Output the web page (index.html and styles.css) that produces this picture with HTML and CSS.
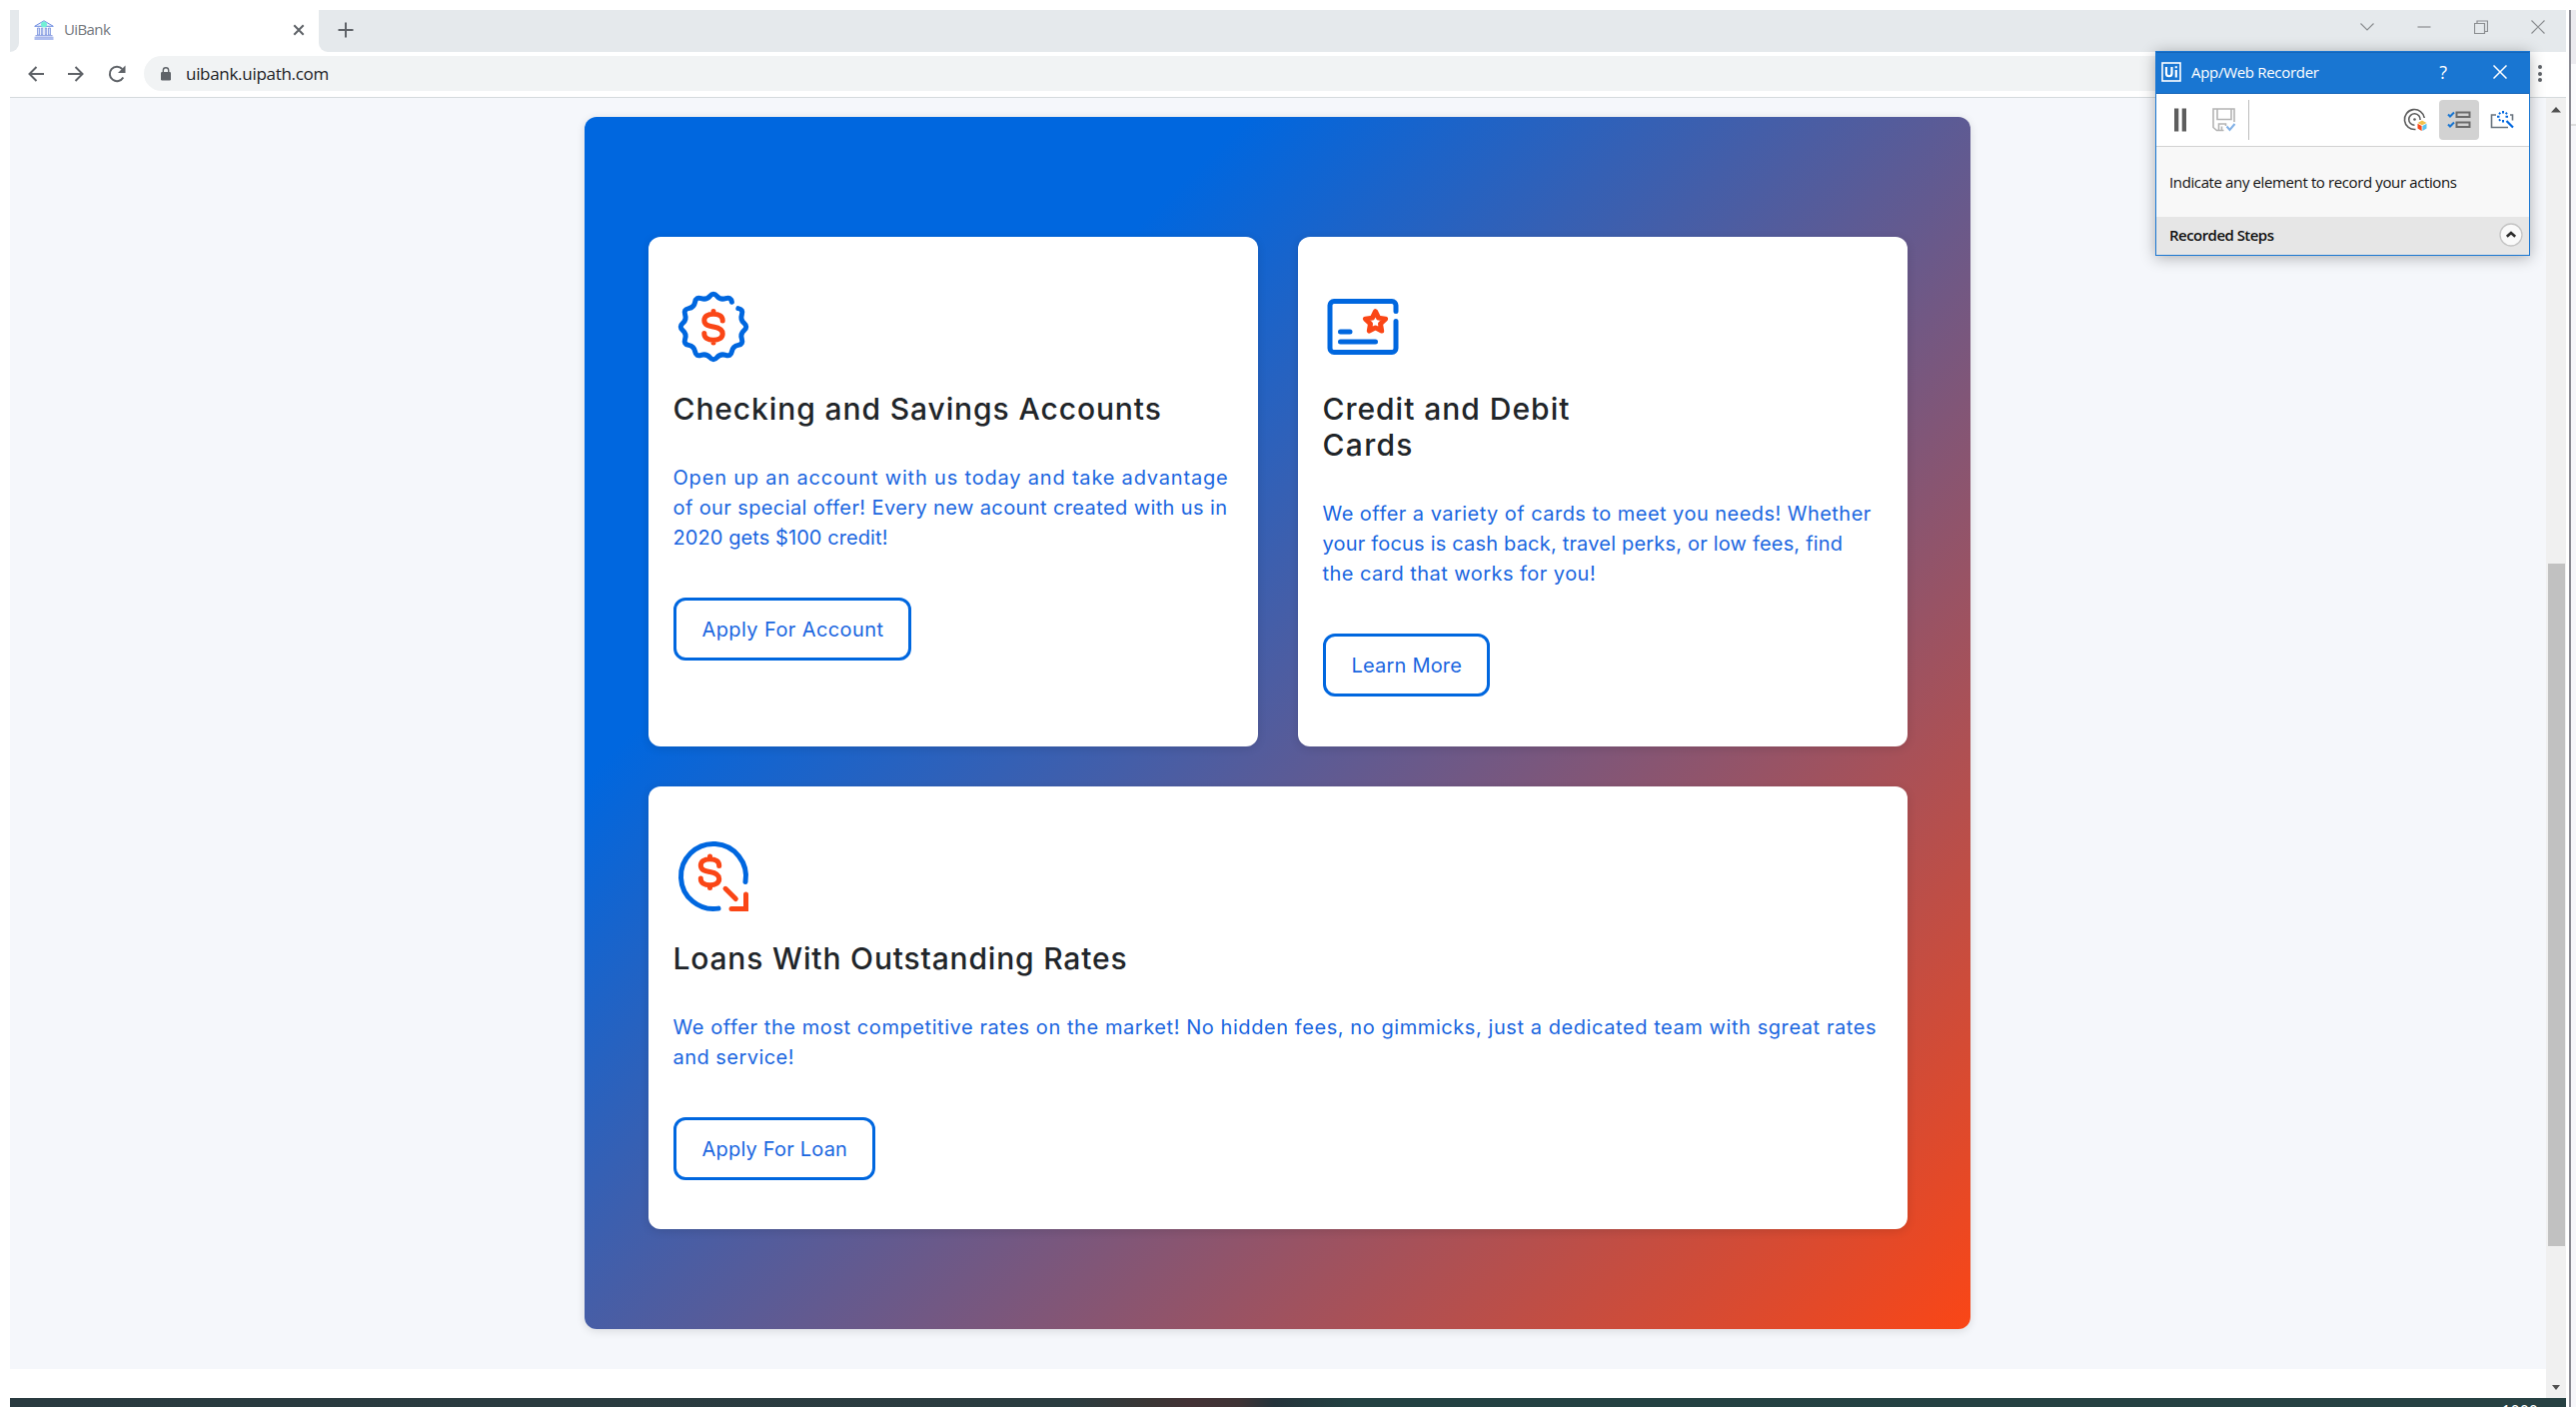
FILE: index.html
```html
<!DOCTYPE html>
<html lang="en">
<head>
<meta charset="utf-8">
<title>UiBank</title>
<link rel="stylesheet" href="styles.css">
</head>
<body>
<div class="browser">
  <header class="tabstrip">
    <div class="strip-start"></div>
    <div class="tab">
      <svg class="favicon" width="20" height="20" viewBox="0 0 20 20">
        <path d="M.7 6.300 10 .8l9.300 5.500z" fill="#eef3fd" stroke="#6d8ce0" stroke-width="1"/>
        <circle cx="10" cy="4.500" r="3" fill="#72f0d6"/>
        <path d="M3.500 8h2v7h-2zM7.300 8h1.500v7H7.300zM11.200 8h1.500v7h-1.500zM14.500 8h2v7h-2z" fill="#d3ddf8" stroke="#6d86da" stroke-width=".7"/>
        <path d="M1.500 15.500h17v2h-17z" fill="#dbe3fa"/>
        <path d="M1.500 15.500h17M.5 17.300h19" stroke="#8398e0" stroke-width=".8"/>
        <path d="M.5 18.500h19v1H.5z" fill="#5f7de0"/>
      </svg>
      <span class="tab-title">UiBank</span>
      <svg class="tab-close" width="12" height="12" viewBox="0 0 12 12"><path d="m1.300 1.300 9.400 9.400m0-9.400-9.400 9.400" stroke="#5f6368" stroke-width="2"/></svg>
    </div>
    <div class="strip-rest">
      <svg class="new-tab" width="16" height="16" viewBox="0 0 16 16"><path d="M8 .5v15M.5 8h15" stroke="#5f6368" stroke-width="2"/></svg>
      <div class="window-controls">
        <svg width="14" height="14" viewBox="0 0 14 14"><path d="m.5 3.500 6.500 6.500 6.500-6.500"/></svg>
        <svg width="14" height="14" viewBox="0 0 14 14"><path d="M.5 7h13"/></svg>
        <svg width="14" height="14" viewBox="0 0 14 14"><path d="M.5 3.500h10v10H.5zM3 3V1h10.500v10.500H11"/></svg>
        <svg width="14" height="14" viewBox="0 0 14 14"><path d="m.5.5 13 13m0-13-13 13"/></svg>
      </div>
    </div>
  </header>
  <div class="toolbar">
    <svg width="16" height="16" viewBox="0 0 16 16"><path d="M16 8H1.500M8.500 1 1.500 8l7 7"/></svg>
    <svg width="16" height="16" viewBox="0 0 16 16"><path d="M0 8h14.500M7.500 1l7 7-7 7"/></svg>
    <svg width="18" height="18" viewBox="0 0 18 18"><path d="M15.300 12.500A7.200 7.200 0 1 1 14.300 4"/><path d="M17.500.5v7.500H10z" fill="#5f6368" stroke="none"/></svg>
    <div class="omnibox">
      <svg width="10" height="14" viewBox="0 0 10 14"><rect y="5" width="10" height="8.500" rx="1.200" fill="#5f6368" stroke="none"/><path d="M2.300 6V3.500a2.700 2.700 0 0 1 5.400 0V6" stroke-width="1.400"/></svg>
      <span>uibank.uipath.com</span>
    </div>
    <div class="menu-dots"><i></i><i></i><i></i></div>
  </div>
  <div class="viewport">
    <main class="page">
      <section class="panel">
        <article class="card">
          <svg class="card-icon" width="80" height="80" viewBox="-40 -40 80 80">
            <path class="blue" d="M24.800-18.400Q30.100-17.400 28.400-12.300Q26.600-7.100 30.700-3.600Q34.800 0 30.700 3.600Q26.600 7.100 28.400 12.300Q30.100 17.400 24.800 18.400Q19.400 19.400 18.400 24.800Q17.400 30.100 12.300 28.400Q7.100 26.600 3.600 30.700Q0 34.800-3.600 30.700Q-7.100 26.600-12.300 28.400Q-17.400 30.100-18.400 24.800Q-19.400 19.400-24.800 18.400Q-30.100 17.400-28.400 12.300Q-26.600 7.100-30.700 3.600Q-34.800 0-30.700-3.600Q-26.600-7.100-28.400-12.300Q-30.100-17.400-24.800-18.400Q-19.400-19.400-18.400-24.800Q-17.400-30.100-12.300-28.400Q-7.100-26.600-3.600-30.700Q0-34.800 3.600-30.700Q7.100-26.600 12.300-28.400Q17.400-30.100 18.400-24.800"/>
            <path class="orange" d="M9.200-6V-6.500C9.200-10.500 5.500-12.800 0-12.800S-9.200-10.500-9.200-6.500C-9.200-1.500-4.500-.8 0 0S9.200 2 9.200 7C9.200 11 5.500 13.200 0 13.200S-9.200 11-9.200 7V6.500M0-15.500V-13M0 13.500V16"/>
          </svg>
          <h2><span class="h-checking">Checking and Savings Accounts</span></h2>
          <p><span class="c1">Open up an account with us today and take advantage</span><br><span class="c2">of our special offer! Every new acount created with us in</span><br><span class="c3">2020 gets $100 credit!</span></p>
          <a class="button b-account">Apply For Account</a>
        </article>
        <article class="card">
          <svg class="card-icon" width="80" height="80" viewBox="-40 -40 80 80">
            <path class="blue" d="M33-15.500V-21.500a4 4 0 0 0-4-4h-58a4 4 0 0 0-4 4v43a4 4 0 0 0 4 4h58a4 4 0 0 0 4-4V-5.500M-22.500 5h9.500M-22.500 15H12.500"/>
            <path class="orange" d="M12.500-15.300 15.600-8.900 22.600-7.900 17.500-3 18.700 4.100 12.500.9 6.300 4.100 7.500-3 2.400-7.900 9.400-8.900Z"/>
          </svg>
          <h2><span class="h-credit">Credit and Debit</span><br><span class="h-cards">Cards</span></h2>
          <p><span class="d1">We offer a variety of cards to meet you needs! Whether</span><br><span class="d2">your focus is cash back, travel perks, or low fees, find</span><br><span class="d1">the card that works for you!</span></p>
          <a class="button b-learn">Learn More</a>
        </article>
        <article class="card wide">
          <svg class="card-icon" width="80" height="80" viewBox="-40 -40 80 80">
            <path class="blue" d="M32 5.500A32.500 32.500 0 1 0 5 32.100"/>
            <path class="orange" transform="translate(-3.500 -4.500)" d="M9.200-6V-6.500C9.200-10.500 5.500-12.800 0-12.800S-9.200-10.500-9.200-6.500C-9.200-1.500-4.500-.8 0 0S9.200 2 9.200 7C9.200 11 5.500 13.200 0 13.200S-9.200 11-9.200 7V6.500M0-15.500V-13M0 13.500V16"/>
            <path class="orange miter" d="M12 12.300 22.300 22.600M32.500 18V32.500H18"/>
          </svg>
          <h2><span class="h-loans">Loans With Outstanding Rates</span></h2>
          <p><span class="l1">We offer the most competitive rates on the market! No hidden fees, no gimmicks, just a dedicated team with sgreat rates</span><br><span class="d1">and service!</span></p>
          <a class="button b-loan">Apply For Loan</a>
        </article>
      </section>
    </main>
    <div class="scrollbar">
      <svg width="10" height="6" viewBox="0 0 10 6"><path d="M5 0l5 5.500H0z" fill="#505050"/></svg>
      <div class="track"><div class="thumb"></div></div>
      <svg width="8" height="5" viewBox="0 0 8 5"><path d="M4 5 8 0H0z" fill="#505050"/></svg>
    </div>
  </div>
  <footer class="desktop"><span>1000</span></footer>
</div>
<div class="edge"><i class="edge-top"></i><i class="edge-rest"></i></div>

<section class="recorder">
  <header class="rec-title">
    <svg width="20" height="20" viewBox="0 0 20 20"><rect x="1" y="1" width="18" height="18" fill="none" stroke="#fff" stroke-width="1.600"/><path d="M5 5v6.500a2.500 2.500 0 0 0 5.500 0V5M14.800 8v7.500M14.800 4.200v2" fill="none" stroke="#fff" stroke-width="2.200"/></svg>
    <span class="rec-name">App/Web Recorder</span>
    <span class="rec-help">?</span>
    <svg width="14" height="14" viewBox="0 0 14 14"><path d="m.5.5 13 13m0-13-13 13" stroke="#fff" stroke-width="1.500"/></svg>
  </header>
  <div class="rec-tools">
    <svg class="pause" width="12" height="24" viewBox="0 0 12 24"><path d="M0 .5h4.300v23H0zM7.700 .5H12v23H7.700z" fill="#5d5d5d"/></svg>
    <svg class="save" width="24" height="24" viewBox="0 0 24 24" fill="none" stroke="#b4b4b4" stroke-width="1.600"><path d="M22 14V1H1v18.500L4.500 22.500h7M5 1v10.500h14V1M6.500 22V16h7v2M9.500 18.500V22"/><path d="m14.500 18.500 3 3.500 5-6" stroke="#82b1e6" stroke-width="2"/></svg>
    <i class="divider"></i>
    <svg class="target" width="24" height="24" viewBox="0 0 24 24" fill="none" stroke="#5d5d5d" stroke-width="1.600"><path d="M21.300 10A10 10 0 1 0 12.500 21.500M17.100 12A5.700 5.700 0 1 0 11.500 17.200"/><circle cx="11.500" cy="11.500" r="1.300" fill="#5d5d5d" stroke="none"/><path d="m14.500 15 4.500-2.500 4.500 2.500-4.500 2.300z" fill="#f3c14b" stroke="none"/><path d="M14.500 15.700 18.600 18v5l-4.100-2.500z" fill="#fa4616" stroke="none"/><path d="M23.500 15.700 19.400 18v5l4.100-2.500z" fill="#5bc4ee" stroke="none"/></svg>
    <div class="tool-on"><svg width="24" height="20" viewBox="0 0 24 20" fill="none"><path d="M9.500 2.500h13v4.500h-13zM9.500 12.500h13v4.500h-13z" stroke="#6a6a6a" stroke-width="2"/><path d="m1 4.500 2 2 4-4M1 14.500l2 2 4-4" stroke="#1976d2" stroke-width="2"/></svg></div>
    <svg class="wand" width="24" height="20" viewBox="0 0 24 20" fill="none"><path d="M6 5H1.500v12.500h16.500M20 5h2.500v5.500" stroke="#68737d" stroke-width="1.600"/><path d="m16.500 11 6.500 6.500" stroke="#0067df" stroke-width="2.200"/><path d="M13 1v2.500M13 10v2.500M7 6.800h2.500M15.500 6.800H18M9 2.800l1.300 1.300M17 2.800l-1.300 1.300M9 10.800l1.300-1.300" stroke="#0067df" stroke-width="2"/></svg>
  </div>
  <p class="rec-hint">Indicate any element to record your actions</p>
  <footer class="rec-steps">
    <span>Recorded Steps</span>
    <svg width="24" height="24" viewBox="0 0 24 24"><circle cx="12" cy="12" r="11" fill="#fafafa" stroke="#c4c4c4" stroke-width="1.300"/><path d="m7.800 13.800 4.200-3.800 4.200 3.800" fill="none" stroke="#2d2d2d" stroke-width="2.600"/></svg>
  </footer>
</section>
</body>
</html>
```
FILE: styles.css
```css
* { box-sizing: border-box; }
svg { display: block; flex: none; }
i { display: block; }

body {
  margin: 0;
  height: 1408px;
  padding: 10px 0 0 10px;
  background: #fff;
  font-family: "Open Sans", "Noto Sans", sans-serif;
  display: flex;
  overflow: hidden;
}

.browser {
  width: 2558px;
  height: 1398px;
  display: flex;
  flex-direction: column;
}

/* Tab strip */
.tabstrip { height: 42px; display: flex; flex: none; background: #fff; }
.strip-start { width: 9px; background: #e5e9ec; border-bottom-right-radius: 9px; }
.tab {
  width: 300px;
  padding: 0 14px 0 15px;
  display: flex;
  align-items: center;
}
.tab-title {
  margin-left: 10px;
  font-size: 15px;
  letter-spacing: -.6px;
  color: #74787d;
}
.tab-close { margin-left: auto; }
.strip-rest {
  flex: 1;
  display: flex;
  align-items: center;
  background: #e5e9ec;
  border-bottom-left-radius: 9px;
  padding: 0 21px 2px 19px;
}
.tab svg { margin-bottom: 2px; }
.tab-title { margin-bottom: 4px; }
.window-controls {
  margin-left: auto;
  margin-bottom: 6px;
  display: flex;
  gap: 43px;
}
.window-controls svg { fill: none; stroke: #8b8e91; stroke-width: 1.2; }

/* Toolbar */
.toolbar {
  height: 46px;
  flex: none;
  display: flex;
  align-items: center;
  padding: 0 24px 2px 18px;
  border-bottom: 1px solid #d5dadd;
  background: #fff;
}
.toolbar > svg { margin-right: 24px; }
.toolbar > svg:nth-child(3) { margin-right: 18px; }
.toolbar svg { fill: none; stroke: #5f6368; stroke-width: 2; }
.omnibox {
  flex: 1;
  height: 35px;
  border-radius: 18px;
  background: #f1f3f4;
  display: flex;
  align-items: center;
  padding-left: 17px;
  gap: 15px;
  font-size: 17px;
  letter-spacing: -.3px;
  color: #202124;
}
.menu-dots { display: grid; gap: 2.500px; margin-left: 24px; }
.menu-dots i { width: 4px; height: 4px; border-radius: 50%; background: #5f6368; }

/* Page */
.viewport { flex: 1; display: flex; min-height: 0; }
.page {
  flex: 1;
  background: linear-gradient(#f5f7fb 1272px, #fff 1272px);
  padding: 19px 0 0 575px;
}
.panel {
  width: 1387px;
  height: 1213px;
  border-radius: 12px;
  padding: 120px 63px 0 64px;
  background: linear-gradient(135deg, #0067df 25.500%, #fa4616);
  box-shadow: 0 2px 10px rgba(0, 0, 0, .12);
  display: grid;
  grid-template-columns: 610px 610px;
  grid-template-rows: 510px 443px;
  gap: 40px;
}
.card {
  background: #fff;
  border-radius: 12px;
  padding: 50px 25px 0 24.500px;
  box-shadow: 0 2px 10px rgba(0, 0, 0, .12);
  font-family: Inter, "Open Sans", sans-serif;
  white-space: nowrap;
}
.wide { grid-column: span 2; }
.card-icon { fill: none; stroke-width: 5; stroke-linecap: round; stroke-linejoin: round; }
.blue { stroke: #0067df; }
.orange { stroke: #fa4616; }
.miter { stroke-linejoin: miter; }
h2 {
  margin: 24px 0 36px;
  font-size: 30px;
  line-height: 36px;
  font-weight: 500;
  color: #212529;
}
.card p {
  margin: 0 0 45px;
  font-size: 20px;
  line-height: 30px;
  font-weight: 400;
  color: #1a66e0;
}
.button {
  display: inline-flex;
  align-items: center;
  height: 63px;
  padding: 0 25px 0 26px;
  border: 3px solid #0067df;
  border-radius: 12px;
  font-size: 20px;
  line-height: 30px;
  font-weight: 400;
  color: #1a66e0;
}

/* Tracking for the individual text runs */
.h-checking { letter-spacing: .9px; }
.h-credit { letter-spacing: .98px; }
.h-cards { letter-spacing: 1.3px; }
.h-loans { letter-spacing: .82px; }
.c1 { letter-spacing: .81px; }
.c2 { letter-spacing: .39px; }
.c3 { letter-spacing: .08px; }
.d1 { letter-spacing: .46px; }
.d2 { letter-spacing: .19px; }
.l1 { letter-spacing: .57px; }
.b-account { letter-spacing: .4px; }
.b-learn { letter-spacing: .2px; }
.b-loan { letter-spacing: .2px; }

/* Scrollbar */
.scrollbar {
  width: 20px;
  background: #f0f0f0;
  display: flex;
  flex-direction: column;
  align-items: center;
  padding: 9px 0 8px;
}
.track { flex: 1; width: 17px; }
.thumb { margin-top: 451px; height: 683px; background: #c1c1c1; }

.desktop {
  height: 9px;
  flex: none;
  overflow: hidden;
  background: linear-gradient(90deg, #293a3f 0, #2b3c40 1060px, #3a3635 1140px, #433235 1180px, #3f3335 1230px, #25333b 1265px, #234142 1340px, #274143 100%);
  padding: 5px 28px 0 0;
  text-align: right;
  font-size: 16px;
  line-height: 16px;
  color: #fff;
}

/* Neighbouring window edge */
.edge { margin-left: 3px; width: 7px; border-left: 2px solid #8a8a93; }
.edge-top { height: 54px; background: #ebeaef; }
.edge-rest { height: 1344px; background: linear-gradient(#fafafc 60px, #ddd 60px, #ddd 62px, #f6f6fa 62px); }

/* Recorder window */
.recorder {
  position: absolute;
  left: 2157px;
  top: 51px;
  width: 375px;
  height: 205px;
  border: 1px solid #1976d2;
  background: #f8f8f8;
  box-shadow: 0 2px 14px rgba(0, 0, 0, .3);
  display: flex;
  flex-direction: column;
  font-size: 15px;
  color: #111;
}
.rec-title {
  height: 42px;
  background: #1976d2;
  border-top: 1px solid #1565b8;
  border-bottom: 1px solid #1565b8;
  display: flex;
  align-items: center;
  padding: 0 22px 3px 5px;
  color: #fff;
}
.rec-name { margin-left: 10px; letter-spacing: -.3px; }
.rec-help { margin: 0 46px 0 auto; font-size: 18px; }
.rec-tools {
  height: 53px;
  background: #fff;
  border-bottom: 1px solid #d2d2d2;
  display: flex;
  align-items: center;
  padding-left: 18px;
}
.save { margin-left: 26px; }
.divider { width: 1px; height: 40px; margin-left: 12px; background: #bdbdbd; }
.target { margin-left: 154px; }
.tool-on {
  width: 40px;
  height: 40px;
  margin-left: 12px;
  border-radius: 4px;
  background: #d2d2d2;
  display: grid;
  place-items: center;
}
.wand { margin-left: 11px; }
.rec-hint {
  margin: 0;
  flex: 1;
  display: flex;
  align-items: center;
  padding-left: 13px;
  letter-spacing: -.38px;
}
.rec-steps {
  height: 38px;
  background: #e6e6e6;
  display: flex;
  align-items: center;
  justify-content: space-between;
  padding: 0 6px 2px 13px;
  font-weight: 600;
  letter-spacing: -.54px;
}
```
